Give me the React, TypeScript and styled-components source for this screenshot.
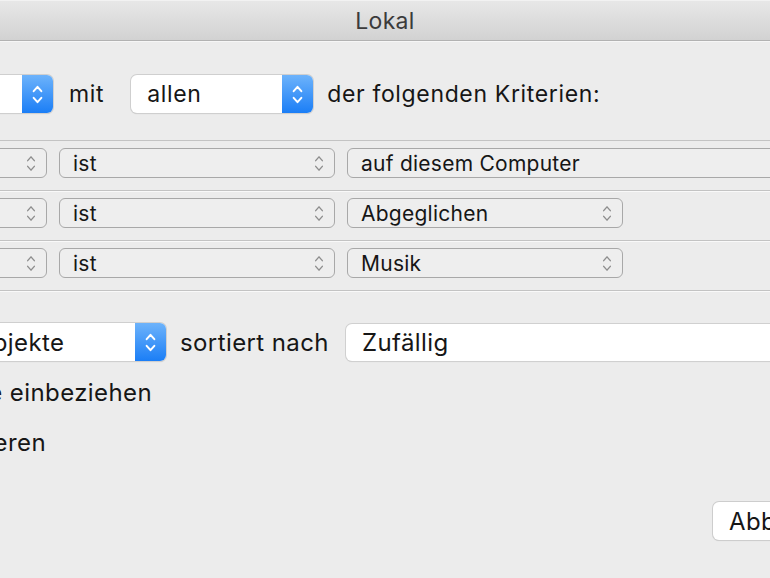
import styled, { createGlobalStyle } from 'styled-components';

const GlobalStyle = createGlobalStyle`
  html, body {
    margin: 0;
    padding: 0;
    background: #ececec;
  }
  body {
    font-family: Inter, "Liberation Sans", sans-serif;
    color: #161616;
    overflow: hidden;
  }
`;

const Window = styled.div`
  width: 770px;
  height: 578px;
  overflow: hidden;
  display: flex;
  flex-direction: column;
  background: #ececec;
`;

const TitleBar = styled.div`
  flex: 0 0 41px;
  display: flex;
  align-items: center;
  justify-content: center;
  padding-top: 2px;
  box-sizing: border-box;
  background: linear-gradient(#e8e8e8, #d2d2d2);
  border-bottom: 1px solid #b2b2b2;
  box-shadow: inset 0 1px 0 #f2f2f2, 0 1px 0 #f6f6f6;
  font-size: 23px;
  letter-spacing: 0.3px;
  color: #3b3b3b;
`;

const Body = styled.div`
  display: flex;
  flex-direction: column;
  padding-top: 34px;
`;

const ControlRow = styled.div`
  display: flex;
  align-items: center;
  height: 38px;
  font-size: 23px;
  letter-spacing: 0.65px;
  white-space: nowrap;
`;

const Label = styled.span<{ $ml?: number }>`
  margin-left: ${p => p.$ml ?? 0}px;
  flex: 0 0 auto;
`;

const Popup = styled.div<{ $width: number; $ml?: number }>`
  flex: 0 0 ${p => p.$width}px;
  min-width: 0;
  margin-left: ${p => p.$ml ?? 0}px;
  height: 38px;
  display: flex;
  box-sizing: border-box;
  background: #fff;
  border-radius: 6px;
  box-shadow: 0 0 0 1px #cfcfcf, 0 1px 1px rgba(0, 0, 0, 0.18);
  overflow: hidden;
`;

const PopupValue = styled.div<{ $pad?: number }>`
  flex: 1;
  display: flex;
  align-items: center;
  padding-left: ${p => p.$pad ?? 16}px;
`;

const Stepper = styled.div`
  flex: 0 0 31px;
  display: flex;
  align-items: center;
  justify-content: center;
  background: linear-gradient(#6db3fb, #1b7ef6);
`;

const Rules = styled.div`
  margin-top: 27px;
  border-top: 1px solid #c3c3c3;
  display: flex;
  flex-direction: column;
`;

const Rule = styled.div`
  display: flex;
  gap: 12px;
  padding: 7px 0 12px;
  border-bottom: 1px solid #c3c3c3;
  box-shadow: 0 1px 0 #f9f9f9;
  white-space: nowrap;
  overflow: hidden;
`;

const RuleBox = styled.div<{ $width: number; $ml?: number }>`
  flex: 0 0 ${p => p.$width}px;
  min-width: 0;
  margin-left: ${p => p.$ml ?? 0}px;
  height: 30px;
  box-sizing: border-box;
  display: flex;
  align-items: center;
  padding: 0 10px 0 13px;
  border: 1px solid #a8a8a8;
  border-radius: 6px;
  background: #eeeeee;
  font-size: 21px;
  letter-spacing: 0.25px;
  color: #161616;
  overflow: hidden;
`;

const RuleText = styled.span`
  flex: 1;
  min-width: 0;
`;

const LimitRow = styled(ControlRow)`
  margin-top: 32px;
  font-size: 24px;
  letter-spacing: 0.4px;
`;

const Field = styled.div`
  flex: 0 0 500px;
  margin-left: 17px;
  height: 37px;
  display: flex;
  align-items: center;
  padding-left: 16px;
  box-sizing: border-box;
  background: #fff;
  border-radius: 6px;
  box-shadow: 0 0 0 1px #d0d0d0, 0 1px 1px rgba(0, 0, 0, 0.15);
`;

const CheckLine = styled.div<{ $mt: number }>`
  margin-top: ${p => p.$mt}px;
  height: 30px;
  display: flex;
  align-items: center;
  font-size: 24px;
  letter-spacing: 0.4px;
  white-space: nowrap;
`;

const ClippedText = styled.span<{ $end: number }>`
  flex: 0 0 500px;
  margin-left: ${p => p.$end - 500}px;
  text-align: right;
`;

const Footer = styled.div`
  margin-top: 45px;
  margin-right: -200px;
  padding-right: 20px;
  display: flex;
  justify-content: flex-end;
  gap: 12px;
`;

const Button = styled.button<{ $width: number }>`
  width: ${p => p.$width}px;
  height: 38px;
  font-family: inherit;
  font-size: 24px;
  letter-spacing: 0.4px;
  color: #161616;
  text-align: left;
  padding: 0 0 0 16px;
  border: none;
  border-radius: 6px;
  background: #fff;
  box-shadow: 0 0 0 1px #cdcdcd, 0 1px 1px rgba(0, 0, 0, 0.15);
`;

function Chevrons({ color, w, h, sw = 1.8 }: { color: string; w: number; h: number; sw?: number }) {
  return (
    <svg width={w} height={h} viewBox="0 0 10 20" fill="none" stroke={color} strokeWidth={sw} strokeLinecap="round" strokeLinejoin="round">
      <path d="M1.5 7 L5 3 L8.5 7" />
      <path d="M1.5 13 L5 17 L8.5 13" />
    </svg>
  );
}

function BluePopup({ value, width, ml, pad }: { value: string; width: number; ml?: number; pad?: number }) {
  return (
    <Popup $width={width} $ml={ml}>
      <PopupValue $pad={pad}>{value}</PopupValue>
      <Stepper>
        <Chevrons color="#fff" w={11} h={23} />
      </Stepper>
    </Popup>
  );
}

function RuleSelect({ value, width, ml, arrows = true }: { value: string; width: number; ml?: number; arrows?: boolean }) {
  return (
    <RuleBox $width={width} $ml={ml}>
      <RuleText>{value}</RuleText>
      {arrows && <Chevrons color="#8e8e8e" w={10} h={19} sw={1.5} />}
    </RuleBox>
  );
}

const rules = [
  { field: 'Ort', value: 'auf diesem Computer', wide: true },
  { field: 'iCloud-Status', value: 'Abgeglichen', wide: false },
  { field: 'Medienart', value: 'Musik', wide: false },
];

export default function App() {
  return (
    <>
      <GlobalStyle />
      <Window>
        <TitleBar>Lokal</TitleBar>
        <Body>
          <ControlRow>
            <BluePopup value="Musik" width={200} ml={-147} />
            <Label $ml={16}>mit</Label>
            <BluePopup value="allen" width={182} ml={27} />
            <Label $ml={14}>der folgenden Kriterien:</Label>
          </ControlRow>

          <Rules>
            {rules.map(rule => (
              <Rule key={rule.field}>
                <RuleSelect value={rule.field} width={260} ml={-213} />
                <RuleSelect value="ist" width={276} />
                <RuleSelect value={rule.value} width={rule.wide ? 500 : 276} arrows={!rule.wide} />
              </Rule>
            ))}
          </Rules>

          <LimitRow>
            <BluePopup value="Objekte" width={208} ml={-42} />
            <Label $ml={14}>sortiert nach</Label>
            <Field>Zufällig</Field>
          </LimitRow>

          <CheckLine $mt={16}>
            <ClippedText $end={152}>Nur markierte Objekte einbeziehen</ClippedText>
          </CheckLine>
          <CheckLine $mt={20}>
            <ClippedText $end={46}>Live-Aktualisieren</ClippedText>
          </CheckLine>

          <Footer>
            <Button $width={125}>Abbrechen</Button>
            <Button $width={100}>OK</Button>
          </Footer>
        </Body>
      </Window>
    </>
  );
}
